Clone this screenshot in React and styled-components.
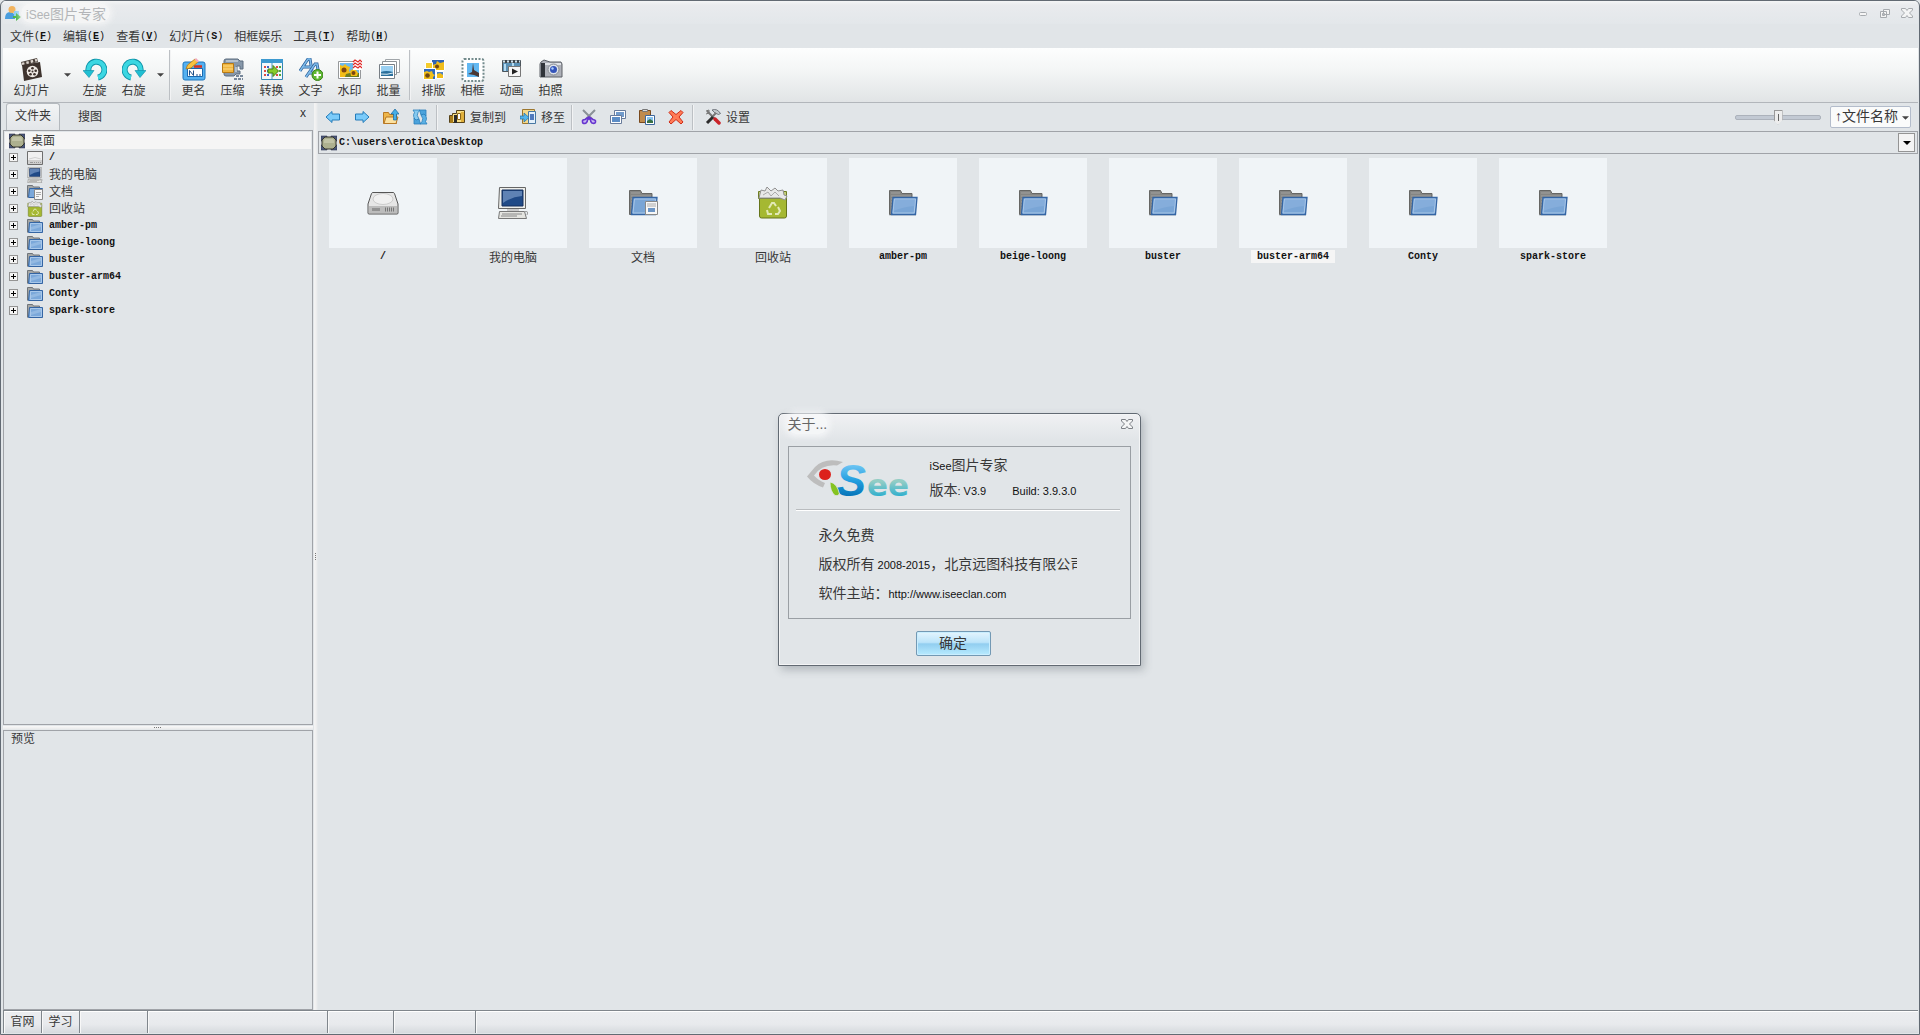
import React, { useState } from 'react';
import styled, { createGlobalStyle, css } from 'styled-components';

const cjk = "'Noto Sans CJK SC', sans-serif";
const mono = "'Liberation Mono', 'Noto Sans CJK SC', monospace";

const GlobalStyle = createGlobalStyle`
  * {
    box-sizing: border-box;
  }

  body {
    margin: 0;
    background: #e1e5e8;
    color: #383838;
    font-family: ${cjk};
    font-size: 12px;
    line-height: 16px;
  }

  button, input, select {
    margin: 0;
    padding: 0;
    border: 0;
    background: transparent;
    color: inherit;
    font: inherit;
  }

  svg {
    display: block;
    flex: none;
  }
`;

const Window = styled.div`
  position: relative;
  display: flex;
  flex-direction: column;
  height: 100vh;
  padding: 0 1px 1px 2px;
  border: 1px solid #626a73;
  border-radius: 6px 6px 0 0;
  background: #e1e5e8;
  box-shadow: inset 0 1px 0 #fff;
  overflow: hidden;
`;

const TitleBar = styled.header`
  display: flex;
  align-items: center;
  height: 23px;
  flex: none;
  padding: 1px 0 0 2px;
  background: linear-gradient(#f4f5f6, #e9ebee 4px, #e3e7ea);
`;

const AppTitle = styled.h1`
  flex: 1;
  margin: 0;
  color: #b3b5b8;
  font-size: 14px;
  font-weight: 400;
  line-height: 18px;

  span {
    padding: 0 4px 0 5px;
    border-radius: 10px;
    background: rgba(247, 247, 248, 0.8);
    box-shadow: 0 0 6px 2px rgba(247, 247, 248, 0.8);
  }

  small {
    font: 12px 'Liberation Sans', sans-serif;
  }
`;

const WindowButton = styled.button`
  display: grid;
  place-items: center;
  width: 22px;
  height: 16px;
`;

const MenuBar = styled.nav`
  display: flex;
  align-items: center;
  gap: 11px;
  height: 24px;
  flex: none;
  padding: 0 7px;
`;

const MenuItem = styled.button`
  display: flex;
  align-items: center;
  white-space: nowrap;

  span {
    color: #111;
    font: 10px ${mono};
  }

  b {
    font-weight: 700;
    text-decoration: ${({ $underlined }) => ($underlined ? 'underline' : 'none')};
  }
`;

const ToolBar = styled.div`
  display: flex;
  align-items: stretch;
  height: 55px;
  flex: none;
  border-bottom: 1px solid #b2b6bb;
  background: linear-gradient(#fdfefe, #f4f6f6 40%, #e1e4e6);
`;

const ToolButton = styled.button`
  display: flex;
  flex-direction: column;
  align-items: center;
  width: ${({ $wide }) => ($wide ? 57 : 39)}px;
  padding-top: 10px;
  white-space: nowrap;
`;

const ArrowButton = styled.button`
  width: 15px;
  display: grid;
  place-items: center;
`;

const Separator = styled.div`
  width: 2px;
  flex: none;
  margin: 2px 3px 2px 1px;
  border-left: 1px solid #bcc0c4;
  background: #f2f3f4;
`;

const Workspace = styled.div`
  display: grid;
  grid-template-columns: 310px 5px minmax(0, 1fr);
  flex: 1;
  min-height: 0;
`;

const SidePanel = styled.aside`
  display: flex;
  flex-direction: column;
  min-height: 0;
`;

const Tabs = styled.div`
  display: flex;
  align-items: flex-end;
  height: 27px;
  flex: none;
  padding: 0 3px;
`;

const Tab = styled.button`
  height: 27px;
  width: 60px;
  padding-bottom: 1px;

  ${({ $active }) =>
    $active &&
    css`
      width: 54px;
      padding-bottom: 5px;
      border: 1px solid #b4b9be;
      border-bottom: 0;
      border-radius: 3px 3px 0 0;
      background: linear-gradient(#f2f4f5, #e3e6e9);
    `}
`;

const CloseTab = styled.button`
  margin: 0 0 8px auto;
  width: 14px;
  color: #111;
  font: 10px/14px ${mono};
`;

const Panel = styled.div`
  border: 1px solid #a0a3a8;
  min-height: 0;
  flex: ${({ $size }) => $size} 1 0;
`;

const Tree = styled.ul`
  margin: 0;
  padding: 1px;
  list-style: none;
`;

const TreeRow = styled.li`
  display: flex;
  align-items: center;
  height: 17px;
  padding-left: 4px;
  background: ${({ $root }) => ($root ? '#f5f5f5' : 'transparent')};
`;

const Expander = styled.button`
  display: grid;
  place-items: center;
  width: 9px;
  height: 9px;
  margin-right: 9px;
  border: 1px solid #949494;
  background: #f4f4f4;
`;

const Name = styled.span`
  color: ${({ $latin }) => ($latin ? '#111' : '#383838')};
  font: ${({ $latin }) => ($latin ? `bold 10px/13px ${mono}` : `12px/13px ${cjk}`)};
  white-space: nowrap;
`;

const TreeName = styled(Name)`
  margin-left: 6px;
  padding-bottom: ${({ $latin }) => ($latin ? 0 : 2)}px;
`;

const Gripper = styled.div`
  display: grid;
  place-items: center;
  background: ${({ $vertical }) =>
    $vertical
      ? 'linear-gradient(90deg, #e1e5e8 1px, #f4f4f4 1px, #f0f0f0 3px, #e1e5e8 5px)'
      : 'linear-gradient(#e1e5e8 1px, #f8f8f8 1px, #f0f0f0 3px, #e1e5e8 5px)'};
  height: ${({ $vertical }) => ($vertical ? 'auto' : '5px')};
  flex: none;
`;

const PreviewTitle = styled.div`
  padding: 0 7px;
  line-height: 14px;
`;

const Browser = styled.main`
  display: flex;
  flex-direction: column;
  min-width: 0;
`;

const ActionBar = styled.div`
  display: flex;
  align-items: center;
  height: 28px;
  flex: none;
`;

const ActionButton = styled.button`
  display: flex;
  align-items: center;
  justify-content: center;
  gap: 5px;
  height: 24px;
  width: ${({ $label }) => ($label ? 'auto' : '29px')};
  padding: ${({ $label }) => ($label ? '0 4px 0 10px' : '0')};
  white-space: nowrap;
`;

const ActionSeparator = styled(Separator)`
  height: 25px;
  margin: 0 1px 0 2px;
`;

const ZoomSlider = styled.input`
  appearance: none;
  width: 86px;
  height: 18px;
  margin: 0 9px 0 auto;

  &::-webkit-slider-runnable-track {
    height: 5px;
    border: 1px solid #acb2bb;
    border-radius: 2px;
    background: #c2c9d3;
  }

  &::-webkit-slider-thumb {
    appearance: none;
    width: 9px;
    height: 15px;
    margin-top: -6px;
    background: linear-gradient(90deg, transparent 3px, #666 3px, #666 4px, transparent 4px) center 3px / 7px 7px no-repeat, #ededed;
    border: 1px solid #999;
    clip-path: polygon(0 0, 100% 0, 100% 70%, 50% 100%, 0 70%);
  }
`;

const SortBox = styled.div`
  position: relative;
  margin-right: 7px;

  svg {
    position: absolute;
    right: 2px;
    top: 10px;
    pointer-events: none;
  }
`;

const SortSelect = styled.select`
  appearance: none;
  width: 81px;
  height: 22px;
  padding: 0 0 2px 4px;
  border: 1px solid #b3bccb;
  border-radius: 2px;
  background: #fafbfb;
  font-family: 'Liberation Sans', 'Noto Sans CJK SC', sans-serif;
  font-size: 14px;
`;

const AddressBar = styled.div`
  display: flex;
  align-items: center;
  height: 23px;
  flex: none;
  padding: 1px 2px;
  border: 1px solid #a0a3a8;
`;

const AddressInput = styled.input`
  flex: 1;
  padding-left: 2px;
  color: #111;
  font: bold 10px ${mono};
`;

const DropButton = styled.button`
  display: grid;
  place-items: center;
  width: 17px;
  height: 19px;
  border: 1px solid #949494;
  background: #f4f4f4;
`;

const Thumbs = styled.div`
  display: grid;
  grid-template-columns: repeat(auto-fill, 130px);
  padding-top: 4px;
`;

const Thumb = styled.figure`
  display: flex;
  flex-direction: column;
  align-items: center;
  gap: 2px;
  margin: 0 11px;
`;

const ThumbImage = styled.div`
  display: grid;
  place-items: center;
  width: 108px;
  height: 90px;
  background: #f0f4f7;
`;

const Caption = styled.figcaption`
  display: flex;
  padding: 0 6px;
  background: ${({ $selected }) => ($selected ? '#f5f5f5' : 'transparent')};
`;

const StatusBar = styled.footer`
  display: flex;
  height: 23px;
  flex: none;
  border-top: 1px solid #80868c;
`;

const StatusCell = styled.div`
  display: flex;
  justify-content: center;
  width: ${({ $width }) => ($width ? `${$width}px` : 'auto')};
  flex: ${({ $width }) => ($width ? 'none' : 1)};
  padding-bottom: 2px;
  border-left: 1px solid #80868c;
  background: linear-gradient(#fff 1px, #ebedf0 1px, #e8eaed 60%, #d6dade);
  box-shadow: inset 1px 0 0 #f8f8f8;
`;

const Overlay = styled.div`
  position: absolute;
  inset: 47px 2px 3px 0;
  display: grid;
  place-items: center;
  pointer-events: none;
`;

const Dialog = styled.section`
  width: 363px;
  padding: 0 9px 9px;
  border: 1px solid #626a73;
  border-radius: 5px 5px 0 0;
  background: linear-gradient(#f0f1f3, #e1e5e8 26px);
  box-shadow: inset 0 0 0 1px #f4f5f6, 3px 4px 8px rgba(70, 80, 90, 0.3);
  pointer-events: auto;
`;

const DialogHead = styled.div`
  display: flex;
  align-items: center;
  justify-content: space-between;
  height: 20px;
  margin: 0 -7px 12px 0;

  h2 {
    margin: 0;
    color: #666;
    font-family: 'Liberation Sans', 'Noto Sans CJK SC', sans-serif;
    font-size: 14px;
    font-weight: 400;
    line-height: 20px;
    border-radius: 8px;
    background: rgba(248, 249, 250, 0.8);
    box-shadow: 0 0 6px 3px rgba(248, 249, 250, 0.8);
  }
`;

const About = styled.div`
  padding: 7px 10px 7px 7px;
  height: 173px;
  border: 1px solid #9a9fa4;
  font-size: 14px;
  line-height: 20px;
`;

const AboutHead = styled.div`
  display: flex;
  gap: 20px;
  height: 56px;
  padding: 0 0 0 11px;
  border-bottom: 1px solid #b9bcbf;
  box-shadow: 0 1px 0 #fff;
`;

const Version = styled.div`
  display: flex;
  flex-direction: column;
  gap: 5px;

  div {
    display: flex;
    align-items: baseline;
    gap: 26px;
  }
`;

const Facts = styled.div`
  display: flex;
  flex-direction: column;
  gap: 9px;
  padding: 14px 0 0 23px;
`;

const Fact = styled.div`
  width: 258px;
  height: 20px;
  overflow: hidden;
  white-space: nowrap;
`;

const Latin = styled.span`
  color: #111;
  font: 11px 'Liberation Sans', sans-serif;
`;

const OkButton = styled.button`
  display: block;
  width: 75px;
  height: 25px;
  margin: 12px auto 0 128px;
  padding-bottom: 3px;
  border: 1px solid #7399b4;
  border-radius: 2px;
  background: linear-gradient(#e4f5fe, #bce4fa 45%, #92cef0 52%, #b8ebff);
  box-shadow: inset 0 0 0 1px #c9eeff;
  font-size: 14px;
  line-height: 20px;
`;

const Triangle = ({ color = '#444', size = 5 }) => (
  <svg width={size + 2} height='4' viewBox='0 0 8 4'>
    <path d='M0 0h8L4 4z' fill={color} />
  </svg>
);

const Icon = ({ size = 24, box = 24, children }) => (
  <svg width={size} height={size} viewBox={`0 0 ${box} ${box}`} aria-hidden='true'>
    {children}
  </svg>
);

const Folder = () => (
  <Icon size={32} box={32}>
    <path d='M2 28.500h27' stroke='#d5dade' />
    <path d='M2.500 27.500v-24h11l1.500 3h10v21z' fill='#858583' stroke='#666664' />
    <path d='M4 6h9M4 9h20M4 12h3M4 15h2M4 18h2M4 21h2' stroke='#a0a09e' />
    <path d='M6 10.500h24l-1.500 17H4.500z' fill='#79a5d6' stroke='#3465a4' strokeWidth='1.300' />
    <path d='M7.500 12h21l-1.300 14H6z' fill='none' stroke='#a9c6e7' />
    <path d='M8 13h20l-.5 6q-10 .5-21 5z' fill='#8db3dd' opacity='.6' />
  </Icon>
);

const TreeFolder = () => (
  <Icon size={16} box={16}>
    <path d='M.5 14.500V1.500h5l1 1.500h6v3' fill='#a5a7a6' stroke='#70757a' />
    <path d='M2.500 4.500h13v10h-14z' fill='#7ba8da' stroke='#3465a4' />
    <path d='M3.500 5.500h11v8h-11z' fill='none' stroke='#a9c8ea' />
    <path d='M4 9l10-3v3L4 12z' fill='#93b9e2' />
  </Icon>
);

const Documents = () => (
  <Icon size={32} box={32}>
    <path d='M2.500 27.500v-24h11l1.500 3h10v21z' fill='#858583' stroke='#666664' />
    <path d='M4 6h9M4 9h20M4 12h3M4 15h2M4 18h2M4 21h2' stroke='#a0a09e' />
    <path d='M6 10.500h24l-1.500 17H4.500z' fill='#79a5d6' stroke='#3465a4' strokeWidth='1.300' />
    <path d='M7.500 12h21l-1.300 14H6z' fill='none' stroke='#a9c6e7' />
    <path d='M18.500 14.500h12v13h-12z' fill='#f7f7f7' stroke='#888' />
    <path d='M20 17h9M20 19h9' stroke='#aaa' />
    <path d='M21 21h7v4h-7z' fill='#6c95c5' />
  </Icon>
);

const TreeDocuments = () => (
  <Icon size={16} box={16}>
    <path d='M.5 13.500V1.500h5l1 1.500h6v3' fill='#a5a7a6' stroke='#70757a' />
    <path d='M2.500 4.500h13v9h-14z' fill='#7ba8da' stroke='#3465a4' />
    <path d='M7.500 5.500h8v10h-8z' fill='#f7f7f7' stroke='#888' />
    <path d='M9 8.500h5M9 10.500h5M9 12.500h3' stroke='#aaa' />
  </Icon>
);

const Drive = () => (
  <Icon size={32} box={32}>
    <path d='M6 5.500h20q1 0 1.500 1L31 17v9q0 1-1 1H2q-1 0-1-1v-9L4.500 6.500Q5 5.500 6 5.500z' fill='#e6e6e6' stroke='#555' />
    <ellipse cx='16' cy='12' rx='10' ry='5.500' fill='#f0f0f0' stroke='#ccc' />
    <path d='M2 19h28v7H2z' fill='#bcbcbc' />
    <path d='M5 21h8v3H5z' fill='#929292' />
    <path d='M18.500 20.500v4m2-4v4m2-4v4m2-4v4m2-4v4' stroke='#777' />
  </Icon>
);

const TreeDrive = () => (
  <Icon size={16} box={16}>
    <path d='M.5 1.500h15v13H.5z' fill='#f0f0f0' stroke='#6e6e6e' />
    <path d='M1 10h14v4H1z' fill='#cfcfcf' />
    <path d='M2 9Q8 6 14 9' fill='none' stroke='#d0d0d0' />
    <path d='M3 12.500h3m1 0h1m1 0h1m1 0h1m1 0h1' stroke='#999' />
  </Icon>
);

const Computer = ({ size = 32 }) => (
  <Icon size={size} box={32}>
    <path d='M2.500.5h26v21h-27z' fill='#eeeeea' stroke='#666' />
    <path d='M5 3h21v16H5z' fill='#204a87' stroke='#152f5c' />
    <path d='M6 4h19v5Q14 10 6 16z' fill='#5f82b4' />
    <path d='M10 22h12v2H10z' fill='#ccc' />
    <path d='M2.500 24.500h25l2 7h-28z' fill='#e5e5e1' stroke='#777' />
    <path d='M5 27h20M4 29h16' stroke='#888' />
    <path d='M27 25q5-2 3 3' fill='none' stroke='#999' />
  </Icon>
);

const Recycle = ({ size = 32 }) => (
  <Icon size={size} box={32}>
    <path d='M2.500 11h27v18q0 2-2 2h-23q-2 0-2-2z' fill='#a5b832' stroke='#66751b' />
    <path d='M1.500 4.500h28v7h-28z' fill='#c4ce7a' stroke='#6f7d25' />
    <path d='M2 11l2-8 4 1 2-4 4 4 4-3 3 3 5-1 1 5 3 1-2 4-5-2z' fill='#e8e8e8' stroke='#909090' />
    <path d='M6 8l5-3 3 4 4-4 4 4' fill='none' stroke='#aaa' />
    <path d='M12 21l3-5h2l2 3m2 1 2 4-2 3h-3m-3 0h-4l-1-4' fill='none' stroke='#e2e9b5' strokeWidth='2' />
  </Icon>
);

const Desktop = () => (
  <Icon size={16} box={16}>
    <path d='M0 1h6v5H0zM10 1h6v5h-6zM0 10h6v5H0zM10 10h6v5h-6z' fill='#4a5678' stroke='#2c3450' strokeWidth='.6' />
    <path d='M4 2h8l3 3v6l-3 3H4l-3-3V5z' fill='#adb08f' stroke='#34352c' />
    <path d='M4 4h8l1 2v2H3V6z' fill='#c1c3a6' />
  </Icon>
);

const AppIcon = () => (
  <Icon size={16} box={16}>
    <path d='M0 14q0-7 5-7t5 7z' fill='#4a9ede' />
    <circle cx='7' cy='4.500' r='3.500' fill='#f2b35e' />
    <path d='M9 6h5v6H9z' fill='#8dccf3' />
    <path d='M8 11h3V8l5 4-5 4v-3H8z' fill='#48b548' />
  </Icon>
);

const CloseGlyph = ({ color = '#a6aaae', size = 12 }) => (
  <Icon size={size} box={12}>
    <path
      d='M.5 1.500h4L6 3.500l1.500-2h4v1.500L8.500 6l3 3v1.500h-4L6 8.500l-1.500 2h-4V9l3-3-3-3z'
      fill='#f4f5f5'
      stroke={color}
    />
  </Icon>
);

// main toolbar drawings, all on a 24x24 board
const drawings = {
  slides: (
    <>
      <path d='M1 4l16-4 1 4L2 8z' fill='#4b403a' />
      <path d='M2 6l15-4' stroke='#ddd6d0' strokeWidth='2.500' strokeDasharray='2.500 2' />
      <path d='M2 7l18-3 2 15-18 4z' fill='#3e332e' />
      <circle cx='12.500' cy='13.500' r='5.800' fill='#efe9e4' />
      <g fill='#3e332e'>
        <circle cx='12.500' cy='13.500' r='1' />
        <circle cx='12.500' cy='10.300' r='1.300' />
        <circle cx='15.700' cy='12.700' r='1.300' />
        <circle cx='14.500' cy='16.300' r='1.300' />
        <circle cx='10.500' cy='16.300' r='1.300' />
        <circle cx='9.300' cy='12.700' r='1.300' />
      </g>
    </>
  ),
  left: (
    <>
      <path d='M5.500 13a8 8 0 1 1 9.500 6.500' fill='none' stroke='#0e93a8' strokeWidth='6' />
      <path d='M5.500 13a8 8 0 1 1 9.500 6.500' fill='none' stroke='#3bd7e2' strokeWidth='4.200' />
      <path d='M0 12.500h11l-5 7z' fill='#20bfd2' stroke='#0b8ca4' strokeWidth='.6' />
    </>
  ),
  right: (
    <>
      <path d='M18.500 13A8 8 0 1 0 9 19.500' fill='none' stroke='#0e93a8' strokeWidth='6' />
      <path d='M18.500 13A8 8 0 1 0 9 19.500' fill='none' stroke='#3bd7e2' strokeWidth='4.200' />
      <path d='M24 12.500H13l5 7z' fill='#20bfd2' stroke='#0b8ca4' strokeWidth='.6' />
    </>
  ),
  rename: (
    <>
      <rect x='1' y='4' width='22' height='18' rx='2' fill='#54b1f1' stroke='#1f77bd' />
      <path d='M5.500 10.500h15v8h-15z' fill='#fff' stroke='#1968ae' />
      <path d='M7.500 17.500v-5l4 5v-5M14 17h2m1 0h2' fill='none' stroke='#1d4f87' />
      <path d='M12 8.500h8' stroke='#d8301e' strokeWidth='2.500' />
      <path d='M4 11l1.500-4L13 1l3 3-7 6z' fill='#f9c33f' stroke='#b07618' strokeWidth='.8' />
      <path d='M12.500 1.500L14 0l3 3-1.500 1.500z' fill='#f3aabb' />
    </>
  ),
  zip: (
    <>
      <path d='M3 3q0-2 2-2h12l2 2h3v8h-3V8h-3v5h3v3h-4l-2 2H5q-2 0-2-2z' fill='#8798aa' stroke='#5c6c7e' />
      <path d='M5 3h12M15 9v5' stroke='#c6d0da' strokeWidth='1.500' />
      <path d='M15 18h7M13 21h9' stroke='#76879a' strokeWidth='2' strokeDasharray='3 1' />
      <path d='M1.500 5.500h11v9h-11z' fill='#f0b640' stroke='#b97a13' />
      <path d='M2 8h10M2 11h10' stroke='#ffda82' />
    </>
  ),
  convert: (
    <>
      <path d='M1.500 1.500h21v20h-21z' fill='#f3f8fb' stroke='#3587b4' />
      <path d='M1 1h22v4H1z' fill='#3d9ad0' />
      <path d='M12 5v16' stroke='#4b9ac4' />
      <path d='M5 8v11' stroke='#dc4b43' strokeWidth='2' strokeDasharray='2 2' />
      <path d='M8 8v11' stroke='#3d63c6' strokeWidth='2' strokeDasharray='2 2' />
      <path d='M17 8v11' stroke='#dc4b43' strokeWidth='2' strokeDasharray='2 2' />
      <path d='M20 8v11' stroke='#54a93a' strokeWidth='2' strokeDasharray='2 2' />
      <path d='M8 11h5V7.500l5.500 5.500-5.500 5.500V15H8z' fill='#86cc2c' stroke='#458012' />
    </>
  ),
  text: (
    <>
      <path d='M1 13L9 1h2l2 12M4 9h8' fill='none' stroke='#285d98' strokeWidth='3' />
      <path d='M1 13L9 1h2l2 12M4 9h8' fill='none' stroke='#80bdeb' strokeWidth='1.500' />
      <path d='M7 19l9-13h2l2 11M10 15h9' fill='none' stroke='#285d98' strokeWidth='3' />
      <path d='M7 19l9-13h2l2 11M10 15h9' fill='none' stroke='#80bdeb' strokeWidth='1.500' />
      <circle cx='18.500' cy='17' r='5.500' fill='#5fb732' stroke='#378017' />
      <path d='M18.500 13.500v7M15 17h7' stroke='#fff' strokeWidth='2' />
    </>
  ),
  watermark: (
    <>
      <path d='M.5 3.500h22v17H.5z' fill='#fff' stroke='#96999b' />
      <path d='M2 5h19v14H2z' fill='#6cb9ec' />
      <path d='M2 15h19v4H2z' fill='#6b7d22' />
      <path d='M2 7l3 1 2-2 2 2 3 1-1 3 1 3-4 1-1 3H2z' fill='#f3bd17' />
      <path d='M12 13l3-2 3 1 2 3-1 3h-6z' fill='#f3bd17' />
      <circle cx='6' cy='12' r='2.500' fill='#7d4712' />
      <circle cx='15.500' cy='15' r='2' fill='#7d4712' />
      <path d='M15 2h9v10h-9z' fill='#fff' />
      <path d='M15 4l2-2 3 2 2-2 2 2M15 7l2-2 3 2 2-2 2 2M15 10l2-2 3 2 2-2 2 2' fill='none' stroke='#e02828' strokeWidth='1.200' />
    </>
  ),
  batch: (
    <>
      <path d='M8.500 1.500h14v13h-14z' fill='#fff' stroke='#a0a5a9' />
      <path d='M5.500 3.500h14v13h-14z' fill='#fff' stroke='#8e9499' />
      <path d='M2.500 6.500h15v14h-15z' fill='#fff' stroke='#777e85' />
      <path d='M4 8h12v10H4z' fill='#9ad0f2' />
      <path d='M4 18v-4q5-2 12 0v4z' fill='#2a6f9c' />
      <path d='M4 16q6 1 12-1' stroke='#dcedf5' fill='none' />
    </>
  ),
  layout: (
    <>
      <path d='M9.500 1.500h13v11h-13z' fill='#2f63b5' stroke='#fff' />
      <path d='M10 12V7l4-1 1-3 3 2 4-1v8z' fill='#f0bd1c' />
      <path d='M3.500 4.500h7v6h-7z' fill='#f4cc2d' stroke='#fff' />
      <path d='M14.500 13.500h7v7h-7z' fill='#4f83c4' stroke='#fff' />
      <path d='M15 20v-4l3-1 3 2v3z' fill='#f1bd16' />
      <path d='M1.500 10.500h12v11h-12z' fill='#2e6ac0' stroke='#fff' />
      <path d='M2 21v-7l3-1 2 1 3-1 1 3 2 1-2 2v2z' fill='#f0bf1c' />
      <circle cx='5.500' cy='17.500' r='2.300' fill='#704815' />
      <circle cx='15' cy='8.500' r='2' fill='#704815' />
    </>
  ),
  frame: (
    <>
      <rect x='1.500' y='1' width='21' height='22' rx='2' fill='#fff' stroke='#738b8c' strokeWidth='2' strokeDasharray='2 1.500' />
      <path d='M6 5h12v14H6z' fill='#62b8f2' />
      <path d='M12 5l1 7 5 3v4l-5-2-6-1 4-2z' fill='#4b3734' />
    </>
  ),
  movie: (
    <>
      <path d='M2.500 2.500h18v11h-18z' fill='#5a91b6' stroke='#4c555c' />
      <path d='M3 3.500h17' stroke='#3e464c' strokeWidth='3' />
      <path d='M3 3.500h17' stroke='#d5e7f1' strokeWidth='2' strokeDasharray='2 2' />
      <path d='M5 6v7M13 5v8' stroke='#b5dbf2' strokeWidth='2' />
      <path d='M8.500 8.500h12v10h-12z' fill='#f6f6f6' stroke='#777' />
      <path d='M12 10.500l6 3-6 3z' fill='#222' />
    </>
  ),
  camera: (
    <>
      <path d='M2 4l3-2 6 2h11l1 2v13H1V6z' fill='#adb0b8' stroke='#5c6067' />
      <path d='M6 5h16v2H6z' fill='#dfe2e6' />
      <path d='M2 5h4v14H2z' fill='#30343a' />
      <circle cx='14.500' cy='11.500' r='5.500' fill='#dde2e8' stroke='#858a92' />
      <circle cx='14.500' cy='11.500' r='3.500' fill='#3454b9' />
      <circle cx='13.500' cy='10.500' r='1.200' fill='#a9cfff' />
    </>
  ),
};

const actions = {
  back: <path d='M1 8l6-5.500V5h7.500v6H7v2.500z' fill='#7bcbfa' stroke='#247cba' />,
  forward: <path d='M15 8L9 2.500V5H1.500v6H9v2.500z' fill='#7bcbfa' stroke='#247cba' />,
  up: (
    <>
      <path d='M.5 14.500v-11h5l1 2h7v9z' fill='#eeb64a' stroke='#b97924' />
      <path d='M1 14.500L3 8h12l-2 6.500z' fill='#fce1a0' stroke='#b97924' />
      <path d='M12 0l4 5h-2.500v6h-3V5H8z' fill='#46aee7' stroke='#17669c' strokeWidth='.7' />
    </>
  ),
  refresh: (
    <>
      <path d='M1 1h7L6 3.500Q4 6 7 10l-3 2Q0 7 2.500 3.500z' fill='#86caf0' stroke='#287dba' strokeWidth='.8' />
      <path d='M15 15H8l2-2.500q2-2.500-1-6.500l3-2q4 5 1.500 8.500z' fill='#5bb0e4' stroke='#287dba' strokeWidth='.8' />
      <path d='M7.500 1H14v6l-2-2-3 1zM8.500 15H2V9l2 2 3-1z' fill='#4ba3dc' stroke='#287dba' strokeWidth='.8' />
    </>
  ),
  copyTo: (
    <>
      <path d='M.5 6.500h3v-2h4v-3h8v12H.5z' fill='#f8df86' stroke='#57431a' />
      <path d='M1 7h3v7H1z' fill='#a87b19' />
      <path d='M5 6h3v8H5z' fill='#2a2a2a' />
      <path d='M8.500 4.500h3v6h-3z' fill='#fdfdfa' stroke='#8b6515' />
      <path d='M12 3h3v10h-3z' fill='#e0b03c' />
    </>
  ),
  moveTo: (
    <>
      <path d='M2.500.5h12v14h-12z' fill='#f5d98b' stroke='#9c762e' />
      <path d='M8.500 2.500h7v12h-7z' fill='#e4f0fa' stroke='#4777a2' />
      <path d='M10 5h4v6h-4z' fill='#4f79bd' />
      <path d='M0 7h4V4l5 4.500L4 13v-3H0z' fill='#55b5ec' stroke='#1c6ea6' strokeWidth='.7' />
    </>
  ),
  cut: (
    <>
      <path d='M2 1l9 9M14 1l-9 9' stroke='#8b9197' strokeWidth='2' />
      <path d='M8 8l-4 2.500q-3 0-2.500 2.500t3.500 1q1.500-1 1.500-3L8 9.500l1.500 1.500q0 2 1.500 3 3 1 3.500-1t-2.500-2.500z' fill='#c9b8f3' stroke='#6735cf' strokeWidth='1.600' />
    </>
  ),
  copy: (
    <>
      <path d='M4.500 1.500h11v8h-11z' fill='#fff' stroke='#687b9b' />
      <path d='M6 3h8v5H6z' fill='#719bcc' />
      <path d='M.5 6.500h11v8H.5z' fill='#fff' stroke='#687b9b' />
      <path d='M2 8h8v5H2z' fill='#5c8dc6' />
    </>
  ),
  paste: (
    <>
      <path d='M.5 1.500h11v12H.5z' fill='#c08b4d' stroke='#79491d' />
      <path d='M3.500.5h5v2h-5z' fill='#ddd' stroke='#777' />
      <path d='M6.500 6.500h9v9h-9z' fill='#fff' stroke='#3f689d' />
      <path d='M8 8h6v6H8z' fill='#87c3f0' />
      <path d='M8 14v-2l3-2 3 2v2z' fill='#397044' />
    </>
  ),
  remove: (
    <path d='M3 1.500l5 4 5-4 2 2L11 8l4 5-2 2-5-4.500L3 15l-2-2 4-5-4-4.500z' fill='#ff7b56' stroke='#cf2d18' />
  ),
  settings: (
    <>
      <path d='M2 2l8 8' stroke='#777' strokeWidth='2' />
      <path d='M7 1q5-2 8.500 3.500l-2 1L10 4z' fill='#c4c9cc' stroke='#596067' strokeWidth='.8' />
      <path d='M11 4L7 8' stroke='#777' strokeWidth='2' />
      <path d='M8 8l-6 6' stroke='#2c2c2c' strokeWidth='3' />
      <path d='M10 10l4 4' stroke='#ca242a' strokeWidth='3.500' strokeLinecap='round' />
      <path d='M1 2l3-1v3L1 5' fill='none' stroke='#777' />
    </>
  ),
};

const Logo = () => (
  <svg width='103' height='54' viewBox='0 0 103 54' role='img' aria-label='iSee'>
    <defs>
      <linearGradient id='blue' x1='0' y1='0' x2='0' y2='1'>
        <stop offset='0.2' stopColor='#6cc4f3' />
        <stop offset='0.5' stopColor='#239fe0' />
        <stop offset='0.8' stopColor='#0675b9' />
      </linearGradient>
      <linearGradient id='teal' x1='0' y1='0' x2='0' y2='1'>
        <stop offset='0.4' stopColor='#93cdc5' />
        <stop offset='0.8' stopColor='#32b0cd' />
      </linearGradient>
    </defs>
    <path d='M36 8Q18 3 8 13L0 22.500Q6 30 16 33.500l2-4.500Q11 26 7 21.500 15 10 30 11.500z' fill='#bdbdbd' />
    <ellipse cx='18' cy='20.500' rx='6' ry='5.500' fill='#dc211c' />
    <text x='29' y='42' fontFamily='Liberation Sans' fontWeight='700' fontStyle='italic' fontSize='45' fill='url(#blue)'>
      S
    </text>
    <path d='M23 28q7 1 9.500 12-2 2.500-4.500 1.500-5-4-5-13.500z' fill='#85c321' stroke='#e1e5e8' strokeWidth='.8' />
    <text x='60' y='42' fontFamily='DejaVu Sans' fontWeight='700' fontSize='31' fill='url(#teal)'>
      ee
    </text>
  </svg>
);

const menus = [
  ['文件', 'F', true],
  ['编辑', 'E', true],
  ['查看', 'V', true],
  ['幻灯片', 'S', false],
  ['相框娱乐'],
  ['工具', 'T', true],
  ['帮助', 'H', true],
];

const editTools = [
  ['更名', 'rename'],
  ['压缩', 'zip'],
  ['转换', 'convert'],
  ['文字', 'text'],
  ['水印', 'watermark'],
  ['批量', 'batch'],
];

const funTools = [
  ['排版', 'layout'],
  ['相框', 'frame'],
  ['动画', 'movie'],
  ['拍照', 'camera'],
];

const places = [
  { name: '/', Image: Drive, Small: TreeDrive, latin: true },
  { name: '我的电脑', Image: Computer },
  { name: '文档', Image: Documents, Small: TreeDocuments },
  { name: '回收站', Image: Recycle },
  ...['amber-pm', 'beige-loong', 'buster', 'buster-arm64', 'Conty', 'spark-store'].map((name) => ({
    name,
    Image: Folder,
    Small: TreeFolder,
    latin: true,
  })),
];

const statusWidths = [68, 180, 66, 82, null];

const Tool = ({ label, icon, wide }) => (
  <ToolButton $wide={wide}>
    <Icon>{drawings[icon]}</Icon>
    {label}
  </ToolButton>
);

const Action = ({ label, title, icon }) => (
  <ActionButton $label={label} aria-label={label || title}>
    <Icon size={16} box={16}>
      {actions[icon]}
    </Icon>
    {label}
  </ActionButton>
);

function AboutDialog({ onClose }) {
  return (
    <Overlay>
      <Dialog role='dialog' aria-labelledby='about-title'>
        <DialogHead>
          <h2 id='about-title'>关于...</h2>
          <WindowButton aria-label='关闭' onClick={onClose}>
            <CloseGlyph color='#7b7f84' />
          </WindowButton>
        </DialogHead>
        <About>
          <AboutHead>
            <Logo />
            <Version>
              <span>
                <Latin>iSee</Latin>图片专家
              </span>
              <div>
                <span>
                  版本<Latin>: V3.9</Latin>
                </span>
                <Latin>Build: 3.9.3.0</Latin>
              </div>
            </Version>
          </AboutHead>
          <Facts>
            <Fact>永久免费</Fact>
            <Fact>
              版权所有<Latin> 2008-2015</Latin>，北京远图科技有限公司
            </Fact>
            <Fact>
              软件主站：<Latin>http://www.iseeclan.com</Latin>
            </Fact>
          </Facts>
        </About>
        <OkButton onClick={onClose}>确定</OkButton>
      </Dialog>
    </Overlay>
  );
}

function App() {
  const [showAbout, setShowAbout] = useState(true);
  const [zoom, setZoom] = useState(50);
  const [path, setPath] = useState('C:\\users\\erotica\\Desktop');

  return (
    <Window>
      <GlobalStyle />
      <TitleBar>
        <AppIcon />
        <AppTitle>
          <span>
            <small>iSee</small>图片专家
          </span>
        </AppTitle>
        <WindowButton aria-label='最小化'>
          <Icon size={12} box={12}>
            <rect x='2.500' y='5.500' width='7' height='3' rx='1' fill='#f5f5f5' stroke='#a6aaae' />
          </Icon>
        </WindowButton>
        <WindowButton aria-label='还原'>
          <Icon size={12} box={12}>
            <path d='M4.500 2.500h6v5h-6zM1.500 4.500h6v6h-6zM3.500 6.500h2v2h-2z' fill='#f5f5f5' stroke='#a6aaae' />
          </Icon>
        </WindowButton>
        <WindowButton aria-label='关闭'>
          <CloseGlyph />
        </WindowButton>
      </TitleBar>

      <MenuBar>
        {menus.map(([label, key, underlined]) => (
          <MenuItem key={label} $underlined={underlined}>
            {label}
            {key && (
              <span>
                (<b>{key}</b>)
              </span>
            )}
          </MenuItem>
        ))}
      </MenuBar>

      <ToolBar>
        <Tool label='幻灯片' icon='slides' wide />
        <ArrowButton aria-label='幻灯片选项'>
          <Triangle />
        </ArrowButton>
        <Tool label='左旋' icon='left' />
        <Tool label='右旋' icon='right' />
        <ArrowButton aria-label='旋转选项'>
          <Triangle />
        </ArrowButton>
        <Separator />
        {editTools.map(([label, icon]) => (
          <Tool key={icon} label={label} icon={icon} />
        ))}
        <Separator />
        {funTools.map(([label, icon]) => (
          <Tool key={icon} label={label} icon={icon} />
        ))}
      </ToolBar>

      <Workspace>
        <SidePanel>
          <Tabs>
            <Tab $active>文件夹</Tab>
            <Tab>搜图</Tab>
            <CloseTab>X</CloseTab>
          </Tabs>
          <Panel $size={596}>
            <Tree>
              <TreeRow $root>
                <Desktop />
                <TreeName>桌面</TreeName>
              </TreeRow>
              {places.map(({ name, Image, Small = Image, latin }) => (
                <TreeRow key={name}>
                  <Expander aria-label={`展开 ${name}`}>
                    <Icon size={5} box={5}>
                      <path d='M0 2h5v1H0zM2 0h1v5H2z' fill='#000' />
                    </Icon>
                  </Expander>
                  <Small size={16} />
                  <TreeName $latin={latin}>{name}</TreeName>
                </TreeRow>
              ))}
            </Tree>
          </Panel>
          <Gripper>
            <svg width='8' height='1'>
              <path d='M0 0h1v1H0zM2 0h1v1H2zM4 0h1v1H4zM6 0h1v1H6z' fill='#777' />
            </svg>
          </Gripper>
          <Panel $size={279}>
            <PreviewTitle>预览</PreviewTitle>
          </Panel>
        </SidePanel>
        <Gripper $vertical>
          <svg width='1' height='8'>
            <path d='M0 0h1v1H0zM0 2h1v1H0zM0 4h1v1H0zM0 6h1v1H0z' fill='#777' />
          </svg>
        </Gripper>
        <Browser>
          <ActionBar>
            <Action title='后退' icon='back' />
            <Action title='前进' icon='forward' />
            <Action title='向上' icon='up' />
            <Action title='刷新' icon='refresh' />
            <ActionSeparator />
            <Action label='复制到' icon='copyTo' />
            <Action label='移至' icon='moveTo' />
            <ActionSeparator />
            <Action title='剪切' icon='cut' />
            <Action title='复制' icon='copy' />
            <Action title='粘贴' icon='paste' />
            <Action title='删除' icon='remove' />
            <ActionSeparator />
            <Action label='设置' icon='settings' />
            <ZoomSlider
              type='range'
              aria-label='缩略图大小'
              value={zoom}
              onChange={(event) => setZoom(event.target.value)}
            />
            <SortBox>
              <SortSelect aria-label='排序'>
                <option>↑文件名称</option>
              </SortSelect>
              <Triangle />
            </SortBox>
          </ActionBar>
          <AddressBar>
            <Desktop />
            <AddressInput aria-label='地址' value={path} onChange={(event) => setPath(event.target.value)} />
            <DropButton aria-label='地址列表'>
              <Triangle color='#000' size={6} />
            </DropButton>
          </AddressBar>
          <Thumbs>
            {places.map(({ name, Image, latin }) => (
              <Thumb key={name}>
                <ThumbImage>
                  <Image />
                </ThumbImage>
                <Caption $selected={name === 'buster-arm64'}>
                  <Name $latin={latin}>{name}</Name>
                </Caption>
              </Thumb>
            ))}
          </Thumbs>
        </Browser>
      </Workspace>

      <StatusBar>
        <StatusCell $width={38}>
          <button>官网</button>
        </StatusCell>
        <StatusCell $width={38}>
          <button>学习</button>
        </StatusCell>
        {statusWidths.map((width) => (
          <StatusCell key={width || 'rest'} $width={width} />
        ))}
      </StatusBar>

      {showAbout && <AboutDialog onClose={() => setShowAbout(false)} />}
    </Window>
  );
}

export default App;
